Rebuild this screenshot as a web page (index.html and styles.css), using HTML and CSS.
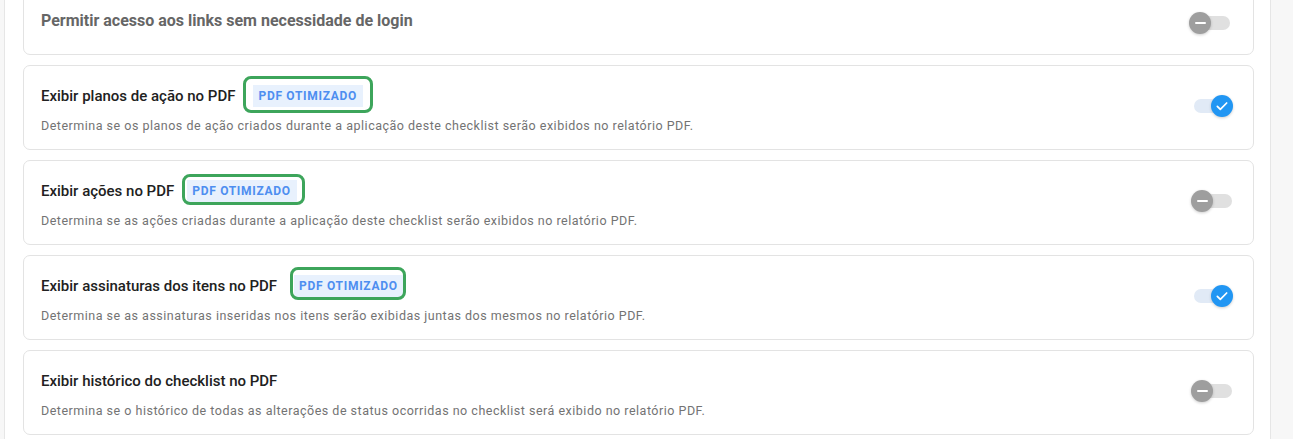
FILE: index.html
```
<!DOCTYPE html>
<html lang="pt-BR">
<head>
    <meta charset="UTF-8">
    <meta name="viewport" content="width=device-width, initial-scale=1.0">
    <title>Configurações do checklist</title>
    <link rel="stylesheet" href="styles.css">
</head>
<body>
    <div class="panel">
        <div class="settings">

            <div class="setting setting-short">
                <div class="setting-text">
                    <div class="setting-title muted">Permitir acesso aos links sem necessidade de login</div>
                </div>
                <div class="switch switch-off switch-shift"><div class="thumb"><span class="minus"></span></div></div>
            </div>

            <div class="setting">
                <div class="setting-text">
                    <div class="setting-title">Exibir planos de ação no PDF
                        <span class="mark mark-a"><span class="badge">PDF OTIMIZADO</span></span>
                    </div>
                    <div class="setting-desc">Determina se os planos de ação criados durante a aplicação deste checklist serão exibidos no relatório PDF.</div>
                </div>
                <div class="switch switch-on">
                    <div class="thumb">
                        <svg viewBox="0 0 24 24" width="16" height="16"><path d="M5 12.5l4.5 4.5L19 7.5" fill="none" stroke="#fff" stroke-width="2.6" stroke-linecap="round" stroke-linejoin="round"/></svg>
                    </div>
                </div>
            </div>

            <div class="setting">
                <div class="setting-text">
                    <div class="setting-title">Exibir ações no PDF
                        <span class="mark mark-b"><span class="badge">PDF OTIMIZADO</span></span>
                    </div>
                    <div class="setting-desc">Determina se as ações criadas durante a aplicação deste checklist serão exibidos no relatório PDF.</div>
                </div>
                <div class="switch switch-off"><div class="thumb"><span class="minus"></span></div></div>
            </div>

            <div class="setting">
                <div class="setting-text">
                    <div class="setting-title">Exibir assinaturas dos itens no PDF
                        <span class="mark mark-c"><span class="badge">PDF OTIMIZADO</span></span>
                    </div>
                    <div class="setting-desc">Determina se as assinaturas inseridas nos itens serão exibidas juntas dos mesmos no relatório PDF.</div>
                </div>
                <div class="switch switch-on">
                    <div class="thumb">
                        <svg viewBox="0 0 24 24" width="16" height="16"><path d="M5 12.5l4.5 4.5L19 7.5" fill="none" stroke="#fff" stroke-width="2.6" stroke-linecap="round" stroke-linejoin="round"/></svg>
                    </div>
                </div>
            </div>

            <div class="setting">
                <div class="setting-text">
                    <div class="setting-title">Exibir histórico do checklist no PDF</div>
                    <div class="setting-desc">Determina se o histórico de todas as alterações de status ocorridas no checklist será exibido no relatório PDF.</div>
                </div>
                <div class="switch switch-off"><div class="thumb"><span class="minus"></span></div></div>
            </div>

        </div>
    </div>
</body>
</html>
```

FILE: styles.css
```
body{
    margin: 0;
    background: #f7f7f7;
    font-family: Roboto, "Noto Sans", sans-serif;
    height: 439px;
    overflow: hidden;
}

.panel{
    display: flow-root;
    overflow: hidden;
    margin-left: 4px;
    width: 1267px;
    height: 100%;
    box-sizing: border-box;
    background: #fff;
    border-left: 1px solid #e6e6e6;
    border-right: 1px solid #e6e6e6;
    padding: 0 16px 0 18px;
}

/* list is scrolled a bit, first card is cut on top */
.settings{
    display: flex;
    flex-direction: column;
    gap: 10px;
    margin-top: -10px;
}

.setting{
    display: flex;
    align-items: center;
    justify-content: space-between;
    height: 85px;
    box-sizing: border-box;
    border: 1px solid #e3e3e3;
    border-radius: 7px;
    padding: 0 21px 4px 17px;
}
.setting-short{
    height: 65px;
    align-items: flex-start;
    padding-top: 17px;
}

.setting-text{
    display: flex;
    flex-direction: column;
    gap: 8px;
    margin-top: 8px;
}
.setting-short .setting-text{
    margin-top: 0;
}

.setting-title{
    display: flex;
    align-items: center;
    height: 24px;
    font-size: 15px;
    font-weight: 500;
    color: #212121;
}
.setting-title.muted{
    font-size: 16px;
    font-weight: 700;
    color: #666;
}

.setting-desc{
    font-size: 12.5px;
    line-height: 20px;
    letter-spacing: 0.5px;
    color: #737373;
}

/* green highlight around the badge */
.mark{
    position: relative;
    display: inline-flex;
}
.mark::after{
    content: "";
    position: absolute;
    border: 3px solid #3da55b;
    border-radius: 8px;
}
.mark-a{ margin-left: 18px; }
.mark-a::after{ top: -9px; bottom: -6px; left: -10px; right: -10px; }
.mark-b{ margin-left: 13px; }
.mark-b::after{ top: -6px; bottom: -3px; left: -5px; right: -8px; }
.mark-c{ margin-left: 17px; }
.mark-c::after{ top: -8px; bottom: -3px; left: -4px; right: -2px; }

.badge{
    display: inline-flex;
    align-items: center;
    height: 22px;
    padding: 0 6px 0 5px;
    background: #e8f1fd;
    color: #4e8ef0;
    font-size: 12px;
    font-weight: 700;
    letter-spacing: 0.7px;
}

.switch{
    position: relative;
    width: 38px;
    height: 14px;
    border-radius: 7px;
}
.switch .thumb{
    position: absolute;
    top: -4px;
    width: 22px;
    height: 22px;
    border-radius: 50%;
    display: flex;
    align-items: center;
    justify-content: center;
}
.switch-off{
    background: #e0e0e0;
}
.switch-off .thumb{
    left: -3px;
    background: #9e9e9e;
    box-shadow: 0 1px 3px rgba(0,0,0,.2);
}
.switch-on{
    background: #e1eaf6;
    width: 34px;
    margin-right: 4px;
}
.switch-on .thumb{
    left: 17px;
    background: #2196f3;
    box-shadow: 0 1px 3px rgba(0,0,0,.2);
}
.switch-shift{
    margin-top: 8px;
    margin-right: 2px;
}
.minus{
    width: 11px;
    height: 2px;
    background: #fff;
    border-radius: 1px;
}
```
